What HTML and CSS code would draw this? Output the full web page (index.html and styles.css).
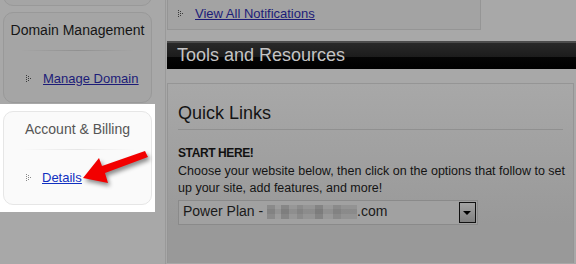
FILE: index.html
```html
<!DOCTYPE html>
<html lang="en">

<head>
    <meta charset="UTF-8">
    <title>Account Manager</title>
    <link rel="stylesheet" href="styles.css">
</head>

<body>
    <div class="page">
        <!-- left menu -->
        <div class="sidebar">
            <div class="side-box cut"></div>

            <div class="side-box">
                <div class="side-title">Domain Management</div>
                <div class="side-rule"></div>
                <a class="side-link" href="#"><svg class="bullet" width="6" height="8" viewBox="0 0 6 8"><rect x="0" y="0" width="1" height="1"/><rect x="0" y="2" width="1" height="1"/><rect x="0" y="4" width="1" height="1"/><rect x="0" y="6" width="1" height="1"/><rect x="2" y="1" width="1" height="1"/><rect x="2" y="3" width="1" height="1"/><rect x="2" y="5" width="1" height="1"/><rect x="4" y="3" width="1" height="1"/></svg><span>Manage Domain</span></a>
            </div>

            <div class="highlight">
                <div class="side-box active">
                    <div class="side-title">Account &amp; Billing</div>
                    <div class="side-rule"></div>
                    <a class="side-link" href="#"><svg class="bullet" width="6" height="8" viewBox="0 0 6 8"><rect x="0" y="0" width="1" height="1"/><rect x="0" y="2" width="1" height="1"/><rect x="0" y="4" width="1" height="1"/><rect x="0" y="6" width="1" height="1"/><rect x="2" y="1" width="1" height="1"/><rect x="2" y="3" width="1" height="1"/><rect x="2" y="5" width="1" height="1"/><rect x="4" y="3" width="1" height="1"/></svg><span>Details</span></a>
                </div>
            </div>
        </div>

        <!-- main column -->
        <div class="main">
            <div class="notice-box">
                <a class="side-link" href="#"><svg class="bullet" width="6" height="8" viewBox="0 0 6 8"><rect x="0" y="0" width="1" height="1"/><rect x="0" y="2" width="1" height="1"/><rect x="0" y="4" width="1" height="1"/><rect x="0" y="6" width="1" height="1"/><rect x="2" y="1" width="1" height="1"/><rect x="2" y="3" width="1" height="1"/><rect x="2" y="5" width="1" height="1"/><rect x="4" y="3" width="1" height="1"/></svg><span>View All Notifications</span></a>
            </div>

            <div class="section-bar">Tools and Resources</div>

            <div class="quick-box">
                <h3>Quick Links</h3>
                <div class="quick-rule"></div>
                <div class="start">START HERE!</div>
                <p>Choose your website below, then click on the options that follow to set up your site, add features, and more!</p>
                <div class="site-select">
                    <div class="site-value">Power Plan - <span class="blurred"></span>.com</div>
                    <div class="site-arrow"></div>
                </div>
            </div>
        </div>
    </div>

    <!-- annotation arrow -->
    <svg class="pointer" width="160" height="200" viewBox="0 0 160 200">
        <polygon points="83,178 99,158 102,166 145,151 148,157 105,173 108,183" fill="#f20000"/>
    </svg>
</body>

</html>
```

FILE: styles.css
```css
body {
    margin: 0;
    background-color: #a8a8a8;
    font-family: "Liberation Sans", Arial, sans-serif;
    overflow: hidden;
}

.page {
    display: flex;
    align-items: flex-start;
}

.sidebar {
    width: 155px;
    flex-shrink: 0;
}

.side-box {
    margin: 0 3px;
    height: 91px;
    background-color: #a5a5a5;
    border: 1px solid #999;
    border-radius: 10px;
    box-sizing: border-box;
}

.side-box.cut {
    height: 40px;
    margin-top: -34px;
    margin-bottom: 6px;
}

.highlight {
    background-color: #fff;
    margin-top: 1px;
    padding: 7px 0;
}

.side-box.active {
    height: 94px;
    background-color: #fafafa;
    border-color: #e6e6e6;
}

.side-title {
    text-align: center;
    font-size: 14px;
    line-height: 16px;
    padding-top: 9px;
    color: #151515;
}

.active .side-title {
    color: #555;
}

.side-rule {
    height: 1px;
    margin: 12px 16px 0;
    background: linear-gradient(to right, rgba(0, 0, 0, 0), rgba(0, 0, 0, 0.12), rgba(0, 0, 0, 0));
}

.active .side-rule {
    background: linear-gradient(to right, rgba(0, 0, 0, 0), rgba(0, 0, 0, 0.08), rgba(0, 0, 0, 0));
}

.side-link {
    display: flex;
    align-items: center;
    font-size: 13px;
    line-height: 15px;
    color: #1c1c78;
    margin: 20px 0 0 22px;
}

.side-link span {
    text-decoration: underline;
}

.active .side-link {
    color: #1030c0;
}

.bullet {
    fill: #3a3a3a;
    margin-right: 11px;
}

.active .bullet {
    fill: #888;
    margin-right: 10px;
}

.main {
    flex: 1;
    margin-left: 10px;
    border-left: 1px solid #999;
    padding-left: 1px;
    min-height: 264px;
}

.notice-box {
    width: 314px;
    height: 31px;
    margin-top: -1px;
    background-color: #a3a3a3;
    border: 1px solid #959595;
    box-sizing: border-box;
}

.notice-box .side-link {
    margin: 6px 0 0 10px;
}

.section-bar {
    margin-top: 11px;
    height: 28px;
    padding-left: 10px;
    font-size: 18px;
    line-height: 28px;
    color: #c4c4c4;
    background: linear-gradient(#4c4c4c 0, #4c4c4c 2px, #292929 2px, #1c1c1c 16px, #050505 16px, #000 28px);
}

.quick-box {
    width: 407px;
    margin-top: 14px;
    height: 180px;
    padding: 19px 6px 0 10px;
    box-sizing: border-box;
    border: 1px solid #959595;
    border-bottom: none;
    background: linear-gradient(#a8a8a8, #999 140px);
}

h3 {
    margin: 0 4px 0 0;
    font-size: 18px;
    line-height: 21px;
    font-weight: normal;
    color: #141414;
}

.quick-rule {
    height: 1px;
    background-color: #909090;
    margin: 5px 4px 0 0;
}

.start {
    margin-top: 16px;
    font-size: 12px;
    font-weight: bold;
    letter-spacing: -0.4px;
    line-height: 15px;
    color: #111;
}

p {
    margin: 2px 0 0;
    font-size: 12.5px;
    line-height: 17px;
    color: #141414;
}

.site-select {
    display: flex;
    width: 300px;
    height: 25px;
    margin-top: 3px;
    background-color: #a1a1a1;
    border: 1px solid #8a8a8a;
    box-sizing: border-box;
}

.site-value {
    flex: 1;
    padding-left: 4px;
    font-size: 14px;
    line-height: 20px;
    color: #1a1a1a;
}

.blurred {
    display: inline-block;
    vertical-align: -3px;
    width: 90px;
    height: 14px;
    background:
        linear-gradient(transparent 0 4px, rgba(0, 0, 0, 0.06) 4px 9px, transparent 9px),
        linear-gradient(90deg, #8a8a8a 0 8px, #9c9c9c 8px 14px, #868686 14px 22px, #979797 22px 30px, #8b8b8b 30px 36px, #959595 36px 48px, #848484 48px 56px, #999 56px 66px, #8a8a8a 66px 74px, #939393 74px 90px);
    filter: blur(0.6px);
}

.site-arrow {
    width: 15px;
    margin: 1px 1px 1px 0;
    border: 1px solid #111;
    background: linear-gradient(#a3a3a3, #808080);
    position: relative;
}

.site-arrow::after {
    content: "";
    position: absolute;
    left: 3px;
    top: 8px;
    border-left: 4px solid transparent;
    border-right: 4px solid transparent;
    border-top: 4px solid #000;
}

.pointer {
    position: absolute;
    left: 0;
    top: 0;
    filter: drop-shadow(2px 3px 2px rgba(0, 0, 0, 0.45));
}
```
